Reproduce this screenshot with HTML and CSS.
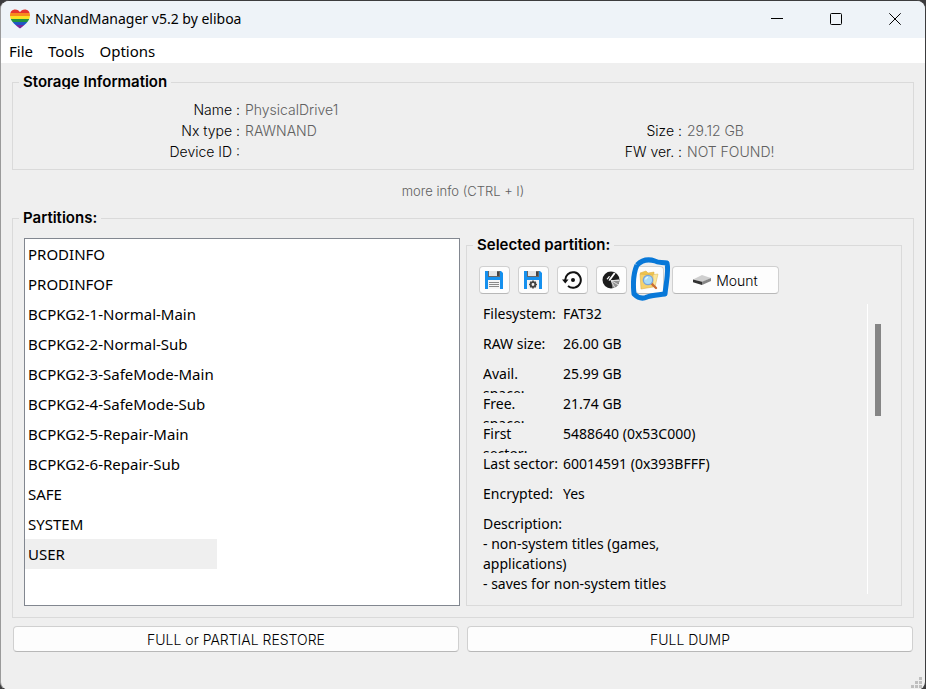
FILE: index.html
```html
<!DOCTYPE html>
<html lang="en">
<head>
<meta charset="utf-8">
<title>NxNandManager v5.2 by eliboa</title>
<link rel="stylesheet" href="styles.css">
</head>
<body>
<div class="window">
  <header class="titlebar">
    <svg class="logo" width="20" height="20" viewBox="0 0 20 20" aria-hidden="true">
      <defs>
        <clipPath id="heart"><path d="M10 19.500C6.500 16.800 0 12.500 0 6.500C0 2.500 2.400.500 5.200.500C7.400.500 9.200 1.600 10 3.300C10.800 1.600 12.600.500 14.800.500C17.600.500 20 2.500 20 6.500C20 12.500 13.500 16.800 10 19.500Z"/></clipPath>
      </defs>
      <g clip-path="url(#heart)">
        <path fill="#e5352d" d="M0 0h20v4H0z"/>
        <path fill="#f88b1e" d="M0 4h20v3H0z"/>
        <path fill="#fbe224" d="M0 7h20v3H0z"/>
        <path fill="#23933f" d="M0 10h20v3H0z"/>
        <path fill="#2056c4" d="M0 13h20v3H0z"/>
        <path fill="#76289c" d="M0 16h20v4H0z"/>
      </g>
    </svg>
    <h1 class="title">NxNandManager v5.2 by eliboa</h1>
    <div class="caption-buttons">
      <button type="button" aria-label="Minimize"><svg width="12" height="12" viewBox="0 0 12 12"><path d="M0 5.500h12"/></svg></button>
      <button type="button" aria-label="Maximize"><svg width="12" height="12" viewBox="0 0 12 12"><rect x=".5" y=".5" width="11" height="11" rx="1"/></svg></button>
      <button type="button" aria-label="Close"><svg width="12" height="12" viewBox="0 0 12 12"><path d="M.3.300l11.400 11.400M11.700.300L.3 11.700"/></svg></button>
    </div>
  </header>
  <nav class="menubar">
    <button type="button">File</button>
    <button type="button">Tools</button>
    <button type="button">Options</button>
  </nav>
  <main class="content">
    <fieldset class="group">
      <legend>Storage Information</legend>
      <div class="info">
        <span class="key">Name :</span><span class="val">PhysicalDrive1</span><span></span><span></span>
        <span class="key">Nx type :</span><span class="val">RAWNAND</span><span class="key">Size :</span><span class="val">29.12 GB</span>
        <span class="key">Device ID :</span><span></span><span class="key">FW ver. :</span><span class="val">NOT FOUND!</span>
      </div>
    </fieldset>
    <p class="more">more info (CTRL + I)</p>
    <fieldset class="group partitions">
      <legend>Partitions:</legend>
      <div class="split">
        <ul class="list">
          <li>PRODINFO</li>
          <li>PRODINFOF</li>
          <li>BCPKG2-1-Normal-Main</li>
          <li>BCPKG2-2-Normal-Sub</li>
          <li>BCPKG2-3-SafeMode-Main</li>
          <li>BCPKG2-4-SafeMode-Sub</li>
          <li>BCPKG2-5-Repair-Main</li>
          <li>BCPKG2-6-Repair-Sub</li>
          <li>SAFE</li>
          <li>SYSTEM</li>
          <li class="selected">USER</li>
        </ul>
        <fieldset class="group selection">
          <legend>Selected partition:</legend>
          <div class="toolbar">
            <button type="button" class="tool" aria-label="Dump partition">
              <svg width="18" height="18" viewBox="0 0 18 18">
                <path fill="#1590ee" d="M0 0h16l2 2v16H0z"/>
                <path fill="#666" d="M3 0h12v6H3z"/><path fill="#e4e4e4" d="M4 0h8v5H4z"/><path fill="#444" d="M12 1h2v4h-2z"/>
                <path fill="#f4f4f4" d="M3 9h12v9H3z"/><path fill="#888" d="M4 11h10v1H4zM4 13h10v1H4zM4 15h10v1H4z"/>
              </svg>
            </button>
            <button type="button" class="tool" aria-label="Advanced dump">
              <svg width="18" height="18" viewBox="0 0 18 18">
                <path fill="#1590ee" d="M0 0h16l2 2v16H0z"/>
                <path fill="#666" d="M3 0h12v6H3z"/><path fill="#e4e4e4" d="M4 0h8v5H4z"/><path fill="#444" d="M12 1h2v4h-2z"/>
                <path fill="#f4f4f4" d="M3 9h12v9H3z"/>
                <circle cx="9" cy="13.500" r="2.300" fill="none" stroke="#444" stroke-width="1.800"/>
                <path stroke="#444" stroke-width="1.600" d="M9 9.500v1.500M9 16v1.500M5 13.500h1.500M11.500 13.500h1.500M6.200 10.700l1 1M10.800 15.300l1 1M6.200 16.300l1-1M10.800 11.700l1-1"/>
              </svg>
            </button>
            <button type="button" class="tool" aria-label="Restore partition">
              <svg width="20" height="18" viewBox="0 0 20 18">
                <path fill="none" stroke="#111" stroke-width="2" d="M3.200 9.500A7.800 7.800 0 1 1 6 15"/>
                <path fill="#111" d="M0 8.500h6.500L3.300 12.500z"/><circle cx="11" cy="9" r="2" fill="#111"/>
              </svg>
            </button>
            <button type="button" class="tool" aria-label="Format partition">
              <svg width="18" height="18" viewBox="0 0 18 18">
                <circle cx="9" cy="9" r="8.500" fill="#1c1c1c"/>
                <path fill="#929292" d="M9 9.500l8.400-1.500a8.500 8.500 0 0 1-6.900 9.300z"/>
                <path stroke="#ddd" stroke-width="1" d="M9 9.500l8.500 0M9 9.500l7.500 4.500M9 9.500l4 7.500"/>
                <path fill="#fff" d="M12 1.500l1.500 1-5 6.800-1.800.8.300-1.900zM4.500 8l2.500-3 1 .6-2.300 3z"/>
              </svg>
            </button>
            <span class="marked">
              <button type="button" class="tool" aria-label="Explore partition">
                <svg width="20" height="20" viewBox="0 0 20 20">
                  <path fill="#efc44e" stroke="#d8a93c" stroke-width=".5" d="M1 3l6-2 2 2 6-1v4H3z"/>
                  <path fill="#fbe69a" stroke="#dcb550" stroke-width=".5" d="M11 5l8-1-3 13-6-1z"/>
                  <path fill="#f5d16c" stroke="#d8a93c" stroke-width=".5" d="M1 4l13 1v12L2 19z"/>
                  <path stroke="#c96d35" stroke-width="2.400" stroke-linecap="round" d="M12.500 13.500l4.500 4.500"/>
                  <circle cx="9" cy="10" r="4.700" fill="#a9dcf8" stroke="#7aa5dc" stroke-width="1.300"/>
                  <path stroke="#e5f7ff" stroke-width="1.500" d="M6.500 9.500q.5-2 2.500-2.300" fill="none"/>
                </svg>
              </button>
              <svg class="scribble" width="40" height="44" viewBox="0 0 40 44" aria-hidden="true">
                <path d="M6 8C11 3 18 2 24 4C27 6 31 5 36 6C38 15 35 26 34 37C27 38 21 38 16 40C12 42 7 41 3 37C2 28 2 17 6 8"/>
              </svg>
            </span>
            <button type="button" class="mount">
              <svg width="18" height="10" viewBox="0 0 18 10">
                <path fill="#cfcfcf" d="M0 4.500L9 0l9 3-9 4z"/><path fill="#333" d="M0 4.500l9 2.200V10L0 7.200z"/><path fill="#858585" d="M9 6.700L18 3v3l-9 4z"/>
              </svg>
              Mount
            </button>
          </div>
          <div class="details">
            <div class="text">
              <dl>
                <dt>Filesystem:</dt><dd>FAT32</dd>
                <dt>RAW size:</dt><dd>26.00 GB</dd>
                <dt>Avail.<br>space:</dt><dd>25.99 GB</dd>
                <dt>Free.<br>space:</dt><dd>21.74 GB</dd>
                <dt>First<br>sector:</dt><dd>5488640 (0x53C000)</dd>
                <dt>Last sector:</dt><dd>60014591 (0x393BFFF)</dd>
                <dt>Encrypted:</dt><dd>Yes</dd>
              </dl>
              <p>Description:<br>- non-system titles (games,<br>applications)<br>- saves for non-system titles</p>
            </div>
            <div class="track"><div class="thumb"></div></div>
          </div>
        </fieldset>
      </div>
    </fieldset>
    <div class="actions">
      <button type="button">FULL or PARTIAL RESTORE</button>
      <button type="button">FULL DUMP</button>
    </div>
  </main>
  <footer class="statusbar">
    <svg width="11" height="11" viewBox="0 0 11 11" aria-hidden="true"><path fill="#bfbfbf" d="M8 0h3v3H8zM4 4h3v3H4zM8 4h3v3H8zM0 8h3v3H0zM4 8h3v3H4zM8 8h3v3H8z"/></svg>
  </footer>
</div>
</body>
</html>
```
FILE: styles.css
```css
* {
  box-sizing: border-box;
}

body {
  margin: 0;
  background: #3c3c3e;
  color: #000;
  font: 14px/20px "Noto Sans", sans-serif;
}

button {
  margin: 0;
  padding: 0;
  border: 0;
  background: none;
  color: inherit;
  font: inherit;
}

.window {
  display: flex;
  flex-direction: column;
  min-height: 100vh;
  border: 1px solid #3c3c3e;
  border-left-color: #9a9a9a;
  border-radius: 9px;
  background: #efefef;
  overflow: hidden;
}

.titlebar {
  display: flex;
  align-items: center;
  height: 37px;
  padding: 0 1px 1px 9px;
  background: #eef3f8;
}

.title {
  flex: 1;
  margin: 0 0 0 5px;
  font-size: 14px;
  font-weight: 400;
}

.caption-buttons {
  display: flex;
}

.caption-buttons button {
  display: grid;
  place-items: center;
  width: 59px;
  height: 36px;
}

.caption-buttons svg {
  fill: none;
  stroke: #000;
}

.menubar {
  display: flex;
  align-items: center;
  gap: 15px;
  height: 25px;
  padding-left: 8px;
  background: #fff;
  font-size: 15px;
}

.content {
  display: flex;
  flex: 1;
  flex-direction: column;
  padding: 12px 11px 0;
}

.group {
  min-width: 0;
  margin: 0;
  padding: 0;
  border: 1px solid #dadada;
}

legend {
  height: 14px;
  margin-left: 6px;
  padding: 0 4px;
  overflow: hidden;
  font: 600 15px/14px Inter, sans-serif;
}

.info {
  display: grid;
  grid-template-columns: 232fr 213fr 229fr 226fr;
  padding: 10px 0 7px;
  font: 300 14px/21px Inter, sans-serif;
}

.key {
  padding-right: 5px;
  text-align: right;
}

.val,
.more {
  color: #606060;
}

.more {
  margin: 11px 0 10px;
  font: 300 13px/20px Inter, sans-serif;
  text-align: center;
}

.partitions {
  flex: 1;
}

.split {
  display: grid;
  grid-template-columns: 1fr 1fr;
  gap: 6px;
  height: 100%;
  padding: 13px 11px 11px;
}

.list {
  margin: 0;
  padding: 0;
  border: 1px solid #828790;
  background: #fff;
  font-size: 15px;
  list-style: none;
}

.list li {
  width: 192px;
  padding: 0 3px;
  line-height: 30px;
}

.list .selected {
  background: #efefef;
}

.selection {
  display: flex;
  flex-direction: column;
}

.toolbar {
  display: flex;
  gap: 8px;
  padding: 14px 12px 0;
}

.tool,
.mount,
.actions button {
  display: flex;
  align-items: center;
  justify-content: center;
  border: 1px solid #d0d0d0;
  border-bottom-color: #b8b8b8;
  border-radius: 4px;
  background: #fdfdfd;
}

.tool {
  width: 31px;
  height: 28px;
  padding-right: 1px;
}

.marked {
  position: relative;
}

.marked .tool {
  width: 29px;
}

.scribble {
  position: absolute;
  top: -9px;
  left: -4px;
  fill: none;
  stroke: #0878d8;
  stroke-width: 5;
  stroke-linejoin: round;
}

.mount {
  gap: 5px;
  width: 107px;
  height: 28px;
  font: 300 14px Inter, sans-serif;
}

.details {
  display: flex;
  flex: 1;
  margin: 10px 13px 11px 16px;
}

.text {
  flex: 1;
  border-right: 1px solid #fff;
}

.track {
  width: 20px;
  padding: 20px 0 0 7px;
}

.thumb {
  width: 6px;
  height: 92px;
  background: #858585;
}

dl {
  display: grid;
  grid-template-columns: 80px 1fr;
  grid-auto-rows: 30px;
  margin: 0;
}

dt,
dd {
  height: 29px;
  margin: 0;
  overflow: hidden;
  white-space: nowrap;
}

.text p {
  margin: 0;
}

.actions {
  display: grid;
  grid-template-columns: 1fr 1fr;
  gap: 8px;
  padding: 8px 1px 0;
}

.actions button {
  height: 26px;
  font: 300 14px Inter, sans-serif;
}

.statusbar {
  display: flex;
  align-items: flex-end;
  justify-content: flex-end;
  height: 38px;
  padding: 0 3px 2px 0;
}
```
